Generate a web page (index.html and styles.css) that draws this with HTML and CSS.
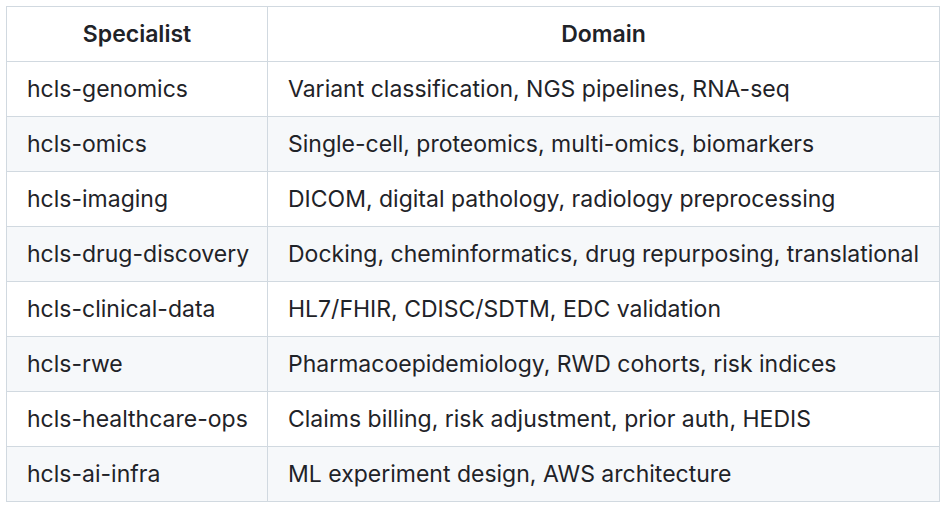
FILE: index.html
```html
<!DOCTYPE html>
<html>
<head>
<meta charset="utf-8">
<link rel="stylesheet" href="styles.css">
</head>
<body>
<table class="spec-table">
  <colgroup>
    <col class="col-a">
    <col class="col-b">
  </colgroup>
  <thead>
    <tr><th>Specialist</th><th>Domain</th></tr>
  </thead>
  <tbody>
    <tr><td>hcls-genomics</td><td>Variant classification, NGS pipelines, RNA-seq</td></tr>
    <tr><td>hcls-omics</td><td>Single-cell, proteomics, multi-omics, biomarkers</td></tr>
    <tr><td>hcls-imaging</td><td>DICOM, digital pathology, radiology preprocessing</td></tr>
    <tr><td>hcls-drug-discovery</td><td>Docking, cheminformatics, drug repurposing, translational</td></tr>
    <tr><td>hcls-clinical-data</td><td>HL7/FHIR, CDISC/SDTM, EDC validation</td></tr>
    <tr><td>hcls-rwe</td><td>Pharmacoepidemiology, RWD cohorts, risk indices</td></tr>
    <tr><td>hcls-healthcare-ops</td><td>Claims billing, risk adjustment, prior auth, HEDIS</td></tr>
    <tr><td>hcls-ai-infra</td><td>ML experiment design, AWS architecture</td></tr>
  </tbody>
</table>
</body>
</html>
```
FILE: styles.css
```css
html, body {
  margin: 0;
  padding: 0;
  background: #ffffff;
}
body {
  padding: 6px;
  font-family: Inter, "Noto Sans", sans-serif;
  color: #1f2328;
}
.spec-table {
  border-collapse: collapse;
  table-layout: fixed;
  width: 933px;
  font-size: 23px;
}
.col-a { width: 261px; }
.col-b { width: 672px; }
.spec-table th,
.spec-table td {
  border: 1px solid #d1d9e0;
  height: 55px;
  padding: 0 20px;
  box-sizing: border-box;
  text-align: left;
  white-space: nowrap;
  line-height: 36px;
}
.spec-table th {
  font-weight: 600;
  text-align: center;
}
.spec-table tbody tr:nth-child(even) {
  background: #f6f8fa;
}
```
